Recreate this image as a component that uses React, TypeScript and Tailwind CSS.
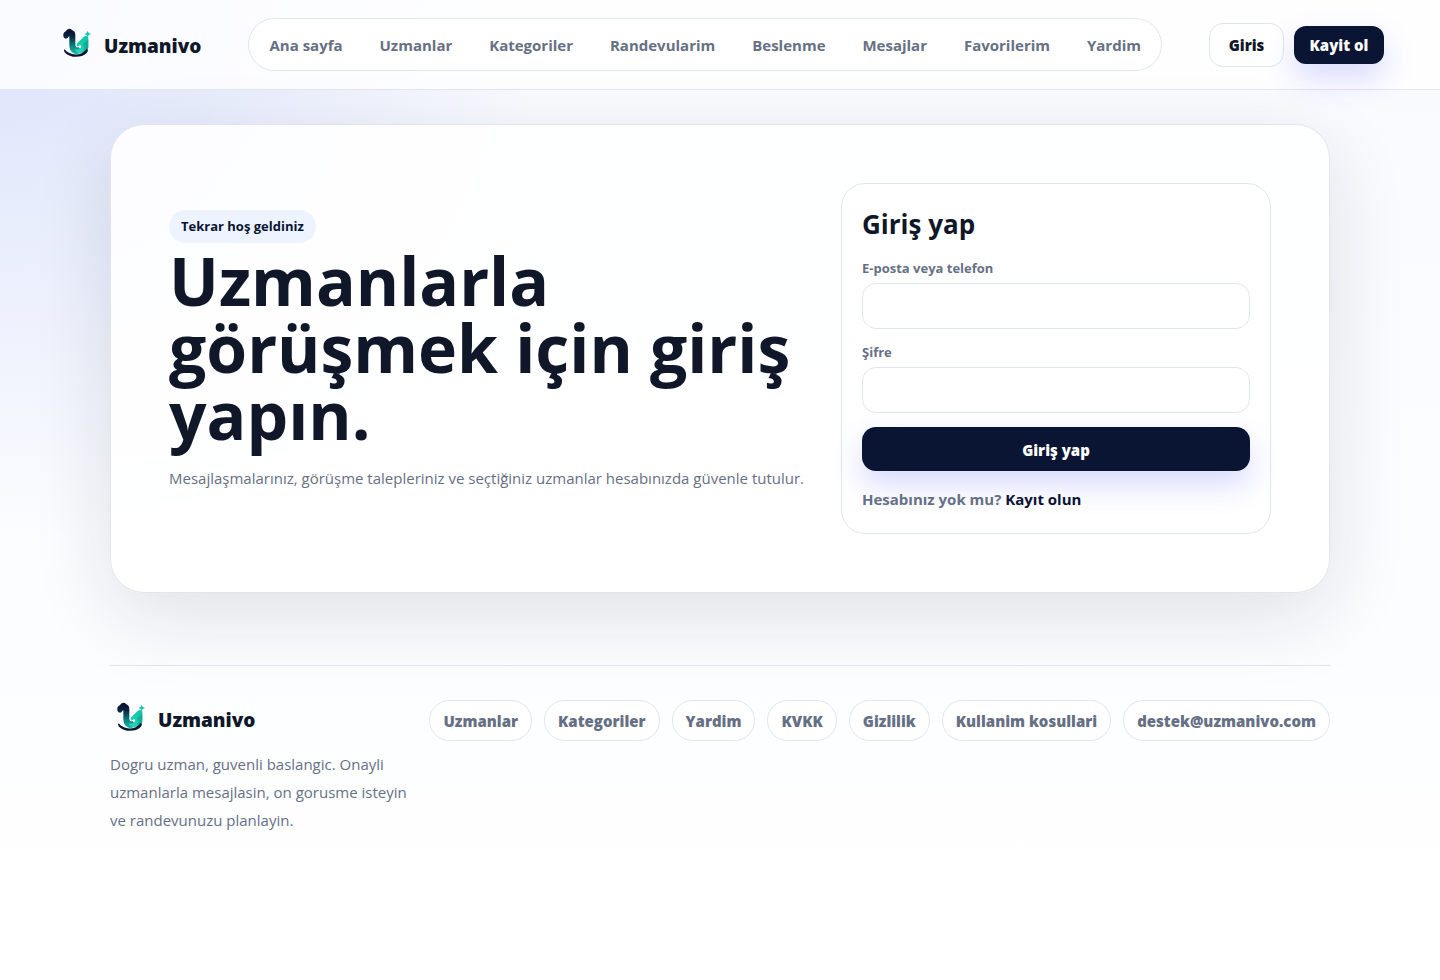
import { useId } from "react";
import { clsx } from "clsx";

const navs = [
  "Ana sayfa",
  "Uzmanlar",
  "Kategoriler",
  "Randevularim",
  "Beslenme",
  "Mesajlar",
  "Favorilerim",
  "Yardim",
];

const footerLinks = [
  "Uzmanlar",
  "Kategoriler",
  "Yardim",
  "KVKK",
  "Gizlilik",
  "Kullanim kosullari",
  "destek@uzmanivo.com",
];

const Logo = () => {
  const id = useId();

  return (
    <svg viewBox="0 0 84 90" className="mb-1 w-7 h-[30px] shrink-0" aria-hidden="true">
      <defs>
        <linearGradient id={`${id}-stem`} x1="0" y1="10" x2="0" y2="76" gradientUnits="userSpaceOnUse">
          <stop offset="0" stopColor="#0a1433" />
          <stop offset="0.25" stopColor="#0c2440" />
          <stop offset="0.65" stopColor="#0b7f80" />
          <stop offset="1" stopColor="#12b8a0" />
        </linearGradient>
        <linearGradient id={`${id}-leaf`} x1="42" y1="60" x2="76" y2="24" gradientUnits="userSpaceOnUse">
          <stop offset="0" stopColor="#22d3b5" />
          <stop offset="1" stopColor="#0cc0a4" />
        </linearGradient>
      </defs>
      <path
        d="M2 27C-1 20 2 12 9 10C12 2 22 0 27 6C35 9 37 14 37 22V49C37 57 41 60 46 57L58 70C50 79 37 80 29 74C22 69 19 61 19 52V24C17 25 15 31 9 32C6 32 3 30 2 27Z"
        fill={`url(#${id}-stem)`}
      />
      <path
        d="M43 45L62 27C67 22 75 23 76 31V56C76 68 64 76 50 75C41 75 36 70 36 63C40 66 47 65 52 61C56 57 55 51 51 52C47 53 46 57 43 55C40 53 40 48 43 45Z"
        fill={`url(#${id}-leaf)`}
      />
      <path d="M60 49L76 36V56C76 65 69 71 60 73C65 65 66 55 60 49Z" fill="#0a917f" opacity="0.5" />
      <path d="M74 8L77 15L84 18L77 21L74 28L71 21L64 18L71 15Z" fill="#10c6a9" />
      <path
        d="M5 64C20 84 54 86 72 62C76 66 75 71 71 75C55 91 21 90 6 74C3 71 2 66 5 64Z"
        fill="#0a1433"
      />
    </svg>
  );
};

const Brand = () => (
  <a href="#" className="flex h-[38px] items-center gap-[13px] pl-[7px] text-[19px] font-extrabold leading-8 text-[#0f1728]">
    <Logo />
    <span className="pt-0.5">Uzmanivo</span>
  </a>
);

const Field = ({ label, type, className }: { label: string; type: string; className?: string }) => (
  <label className={clsx("block text-[13px] leading-5 font-bold text-[#667085]", className)}>
    {label}
    <input
      type={type}
      className="mt-[5px] block h-[46px] w-full rounded-[14px] border border-[#e0e5f0] bg-white px-4 text-base font-normal text-[#0f1728]"
    />
  </label>
);

const Header = () => (
  <header className="flex items-center border-b border-[#e4e7f2] bg-white/85 px-14 py-[18px]">
    <Brand />
    <nav className="mx-[47px] flex h-[53px] flex-1 items-center justify-between rounded-full border border-[#e0e5f0] bg-white px-5 pt-0.5">
      {navs.map((nav) => (
        <a key={nav} href="#" className="text-[15px] font-bold text-[#667085]">
          {nav}
        </a>
      ))}
    </nav>
    <div className="flex items-center gap-2.5">
      <button className="h-11 w-[75px] rounded-[14px] border border-[#e0e5f0] bg-white pt-0.5 text-[15px] font-extrabold text-[#0f1728]">
        Giris
      </button>
      <button className="h-[38px] w-[90px] rounded-xl bg-[#0a1433] pt-0.5 text-[15px] font-extrabold text-white shadow-[0_14px_30px_rgba(79,92,240,0.22)]">
        Kayit ol
      </button>
    </div>
  </header>
);

const App = () => {
  return (
    <div className="min-h-screen bg-[radial-gradient(circle_at_0%_0%,rgba(55,90,225,0.15),transparent_544px),linear-gradient(180deg,#f8faff_0%,#ffffff_100%)] font-['Open_Sans','Noto_Sans',sans-serif] text-[#0f1728]">
      <Header />

      <main className="mx-auto mt-[34px] w-full max-w-[1220px]">
        <section className="flex items-center gap-9 rounded-[34px] border border-[#e0e5f0] bg-white/90 p-[58px] shadow-[0_24px_80px_rgba(15,23,42,0.12)]">
          <div className="flex-1">
            <span className="inline-block rounded-full bg-[#edf3ff] px-3 py-1.5 text-[13px] leading-[21px] font-bold text-[#0a1433]">
              Tekrar hoş geldiniz
            </span>
            <h1 className="mt-1 text-[66px] leading-[67px] font-bold">
              Uzmanlarla görüşmek için giriş yapın.
            </h1>
            <p className="mt-4 mb-4 text-[15px] leading-7 text-[#667085]">
              Mesajlaşmalarınız, görüşme talepleriniz ve seçtiğiniz uzmanlar hesabınızda güvenle tutulur.
            </p>
          </div>

          <form className="w-[430px] shrink-0 rounded-3xl border border-[#e0e5f0] bg-white p-5">
            <h2 className="text-[26px] leading-10 font-bold">Giriş yap</h2>
            <Field label="E-posta veya telefon" type="text" className="mt-3.5" />
            <Field label="Şifre" type="password" className="mt-[13px]" />
            <button
              type="button"
              className="mt-3.5 h-11 w-full rounded-[14px] bg-[#0a1433] pt-0.5 text-[15px] font-extrabold text-white shadow-[0_14px_30px_rgba(79,92,240,0.22)]"
            >
              Giriş yap
            </button>
            <p className="mt-3.5 text-[15px] leading-7 font-bold text-[#667085]">
              Hesabınız yok mu?{" "}
              <a href="#" className="text-[#0a1433]">
                Kayıt olun
              </a>
            </p>
          </form>
        </section>
      </main>

      <footer className="mx-auto mt-[72px] flex w-full max-w-[1220px] items-start justify-between border-t border-[#dfe5ee] pt-[34px]">
        <div className="w-[310px]">
          <Brand />
          <p className="mt-3 text-[15px] leading-7 text-[#667085]">
            Dogru uzman, guvenli baslangic. Onayli uzmanlarla mesajlasin, on gorusme isteyin ve randevunuzu planlayin.
          </p>
        </div>
        <div className="flex gap-3">
          {footerLinks.map((link) => (
            <a
              key={link}
              href="#"
              className="rounded-full border border-[#e0e5f0] bg-white px-[13px] pt-1.5 pb-1 text-[15px] leading-[29px] font-extrabold text-[#667085]"
            >
              {link}
            </a>
          ))}
        </div>
      </footer>
    </div>
  );
};

export default App;
